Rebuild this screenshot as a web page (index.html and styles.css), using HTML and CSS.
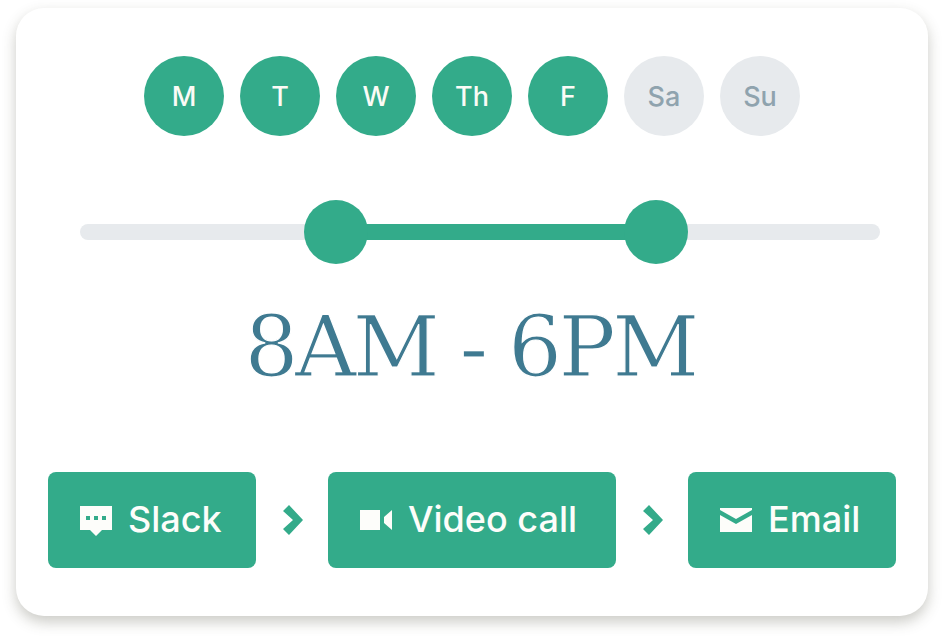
FILE: index.html
```html
<!DOCTYPE html>
<html lang="en">
<head>
  <meta charset="UTF-8">
  <title>Availability</title>
  <link rel="stylesheet" href="styles.css">
</head>
<body>
  <div class="card">
    <div class="days">
      <div class="day on">M</div>
      <div class="day on">T</div>
      <div class="day on">W</div>
      <div class="day on">Th</div>
      <div class="day on">F</div>
      <div class="day">Sa</div>
      <div class="day">Su</div>
    </div>

    <div class="slider">
      <div class="track"></div>
      <div class="fill"></div>
      <div class="thumb thumb-start"></div>
      <div class="thumb thumb-end"></div>
    </div>

    <div class="time">8AM - 6PM</div>

    <div class="steps">
      <div class="step">
        <svg class="icon icon-slack" width="32" height="30" viewBox="0 0 32 30">
          <path fill="#fdfdfa" fill-rule="evenodd" d="M0 0H32V24H22L16 30L10 24H0ZM6 10V14H10V10ZM14 10V14H18V10ZM22 10V14H26V10Z"/>
        </svg>
        Slack
      </div>
      <svg class="chevron" width="20" height="30" viewBox="0 0 20 30">
        <path fill="#33ab8a" d="M6 0L20 15L6 30L0 24L10 15L0 6Z"/>
      </svg>
      <div class="step">
        <svg class="icon" width="32" height="20" viewBox="0 0 32 20">
          <path fill="#fdfdfa" d="M0 0H20V20H0ZM32 0V20L24 13V7Z"/>
        </svg>
        Video call
      </div>
      <svg class="chevron" width="20" height="30" viewBox="0 0 20 30">
        <path fill="#33ab8a" d="M6 0L20 15L6 30L0 24L10 15L0 6Z"/>
      </svg>
      <div class="step">
        <svg class="icon" width="32" height="24" viewBox="0 0 32 24">
          <path fill="#fdfdfa" d="M0 0H32V2L16 11L0 2ZM0 7L16 16L32 7V24H0Z"/>
        </svg>
        Email
      </div>
    </div>
  </div>
</body>
</html>
```

FILE: styles.css
```css
html, body {
  height: 100%;
}

body {
  font-family: Inter, "Liberation Sans", sans-serif;
  background-color: #fff;
  margin: 0;
  padding: 8px 16px 24px;
  box-sizing: border-box;
  overflow: hidden;
}

.card {
  display: flex;
  flex-direction: column;
  height: 608px;
  padding: 48px 32px;
  box-sizing: border-box;
  background-color: #fff;
  border-radius: 28px;
  box-shadow: 0 6px 14px rgba(70, 70, 50, 0.28);
}

.days {
  display: flex;
  justify-content: center;
  gap: 16px;
}

.day {
  display: flex;
  justify-content: center;
  align-items: center;
  width: 80px;
  height: 80px;
  border-radius: 50%;
  background-color: #e7eaed;
  color: #8fa3ae;
  font-size: 27px;
  font-weight: 550;
}

.day.on {
  background-color: #33ab8a;
  color: #fbfbf6;
}

.slider {
  position: relative;
  height: 64px;
  margin: 64px 16px 0 32px;
}

.track, .fill {
  position: absolute;
  top: 24px;
  height: 16px;
}

.track {
  left: 0;
  right: 0;
  background-color: #e7eaed;
  border-radius: 8px;
}

.fill {
  left: 256px;
  width: 320px;
  background-color: #33ab8a;
}

.thumb {
  position: absolute;
  top: 0;
  width: 64px;
  height: 64px;
  border-radius: 50%;
  background-color: #33ab8a;
}

.thumb-start {
  left: 224px;
}

.thumb-end {
  left: 544px;
}

.time {
  flex: 1;
  padding: 28px 4px 0 0;
  font-family: "DejaVu Serif", serif;
  font-size: 85px;
  line-height: 110px;
  letter-spacing: -3.6px;
  text-align: center;
  color: #3f7a91;
  -webkit-text-stroke: 1.2px #fff;
}

.steps {
  display: grid;
  grid-template-columns: 208px 1fr 288px 1fr 208px;
  align-items: center;
  justify-items: center;
}

.chevron {
  margin-left: 2px;
}

.step {
  display: flex;
  align-items: center;
  gap: 16px;
  width: 100%;
  height: 96px;
  padding: 0 0 2px 32px;
  box-sizing: border-box;
  background-color: #33ab8a;
  border-radius: 8px;
  color: #fdfdfa;
  font-size: 36px;
  font-weight: 500;
}

.icon {
  margin-top: 2px;
}

.icon-slack {
  margin-top: 4px;
}
```
